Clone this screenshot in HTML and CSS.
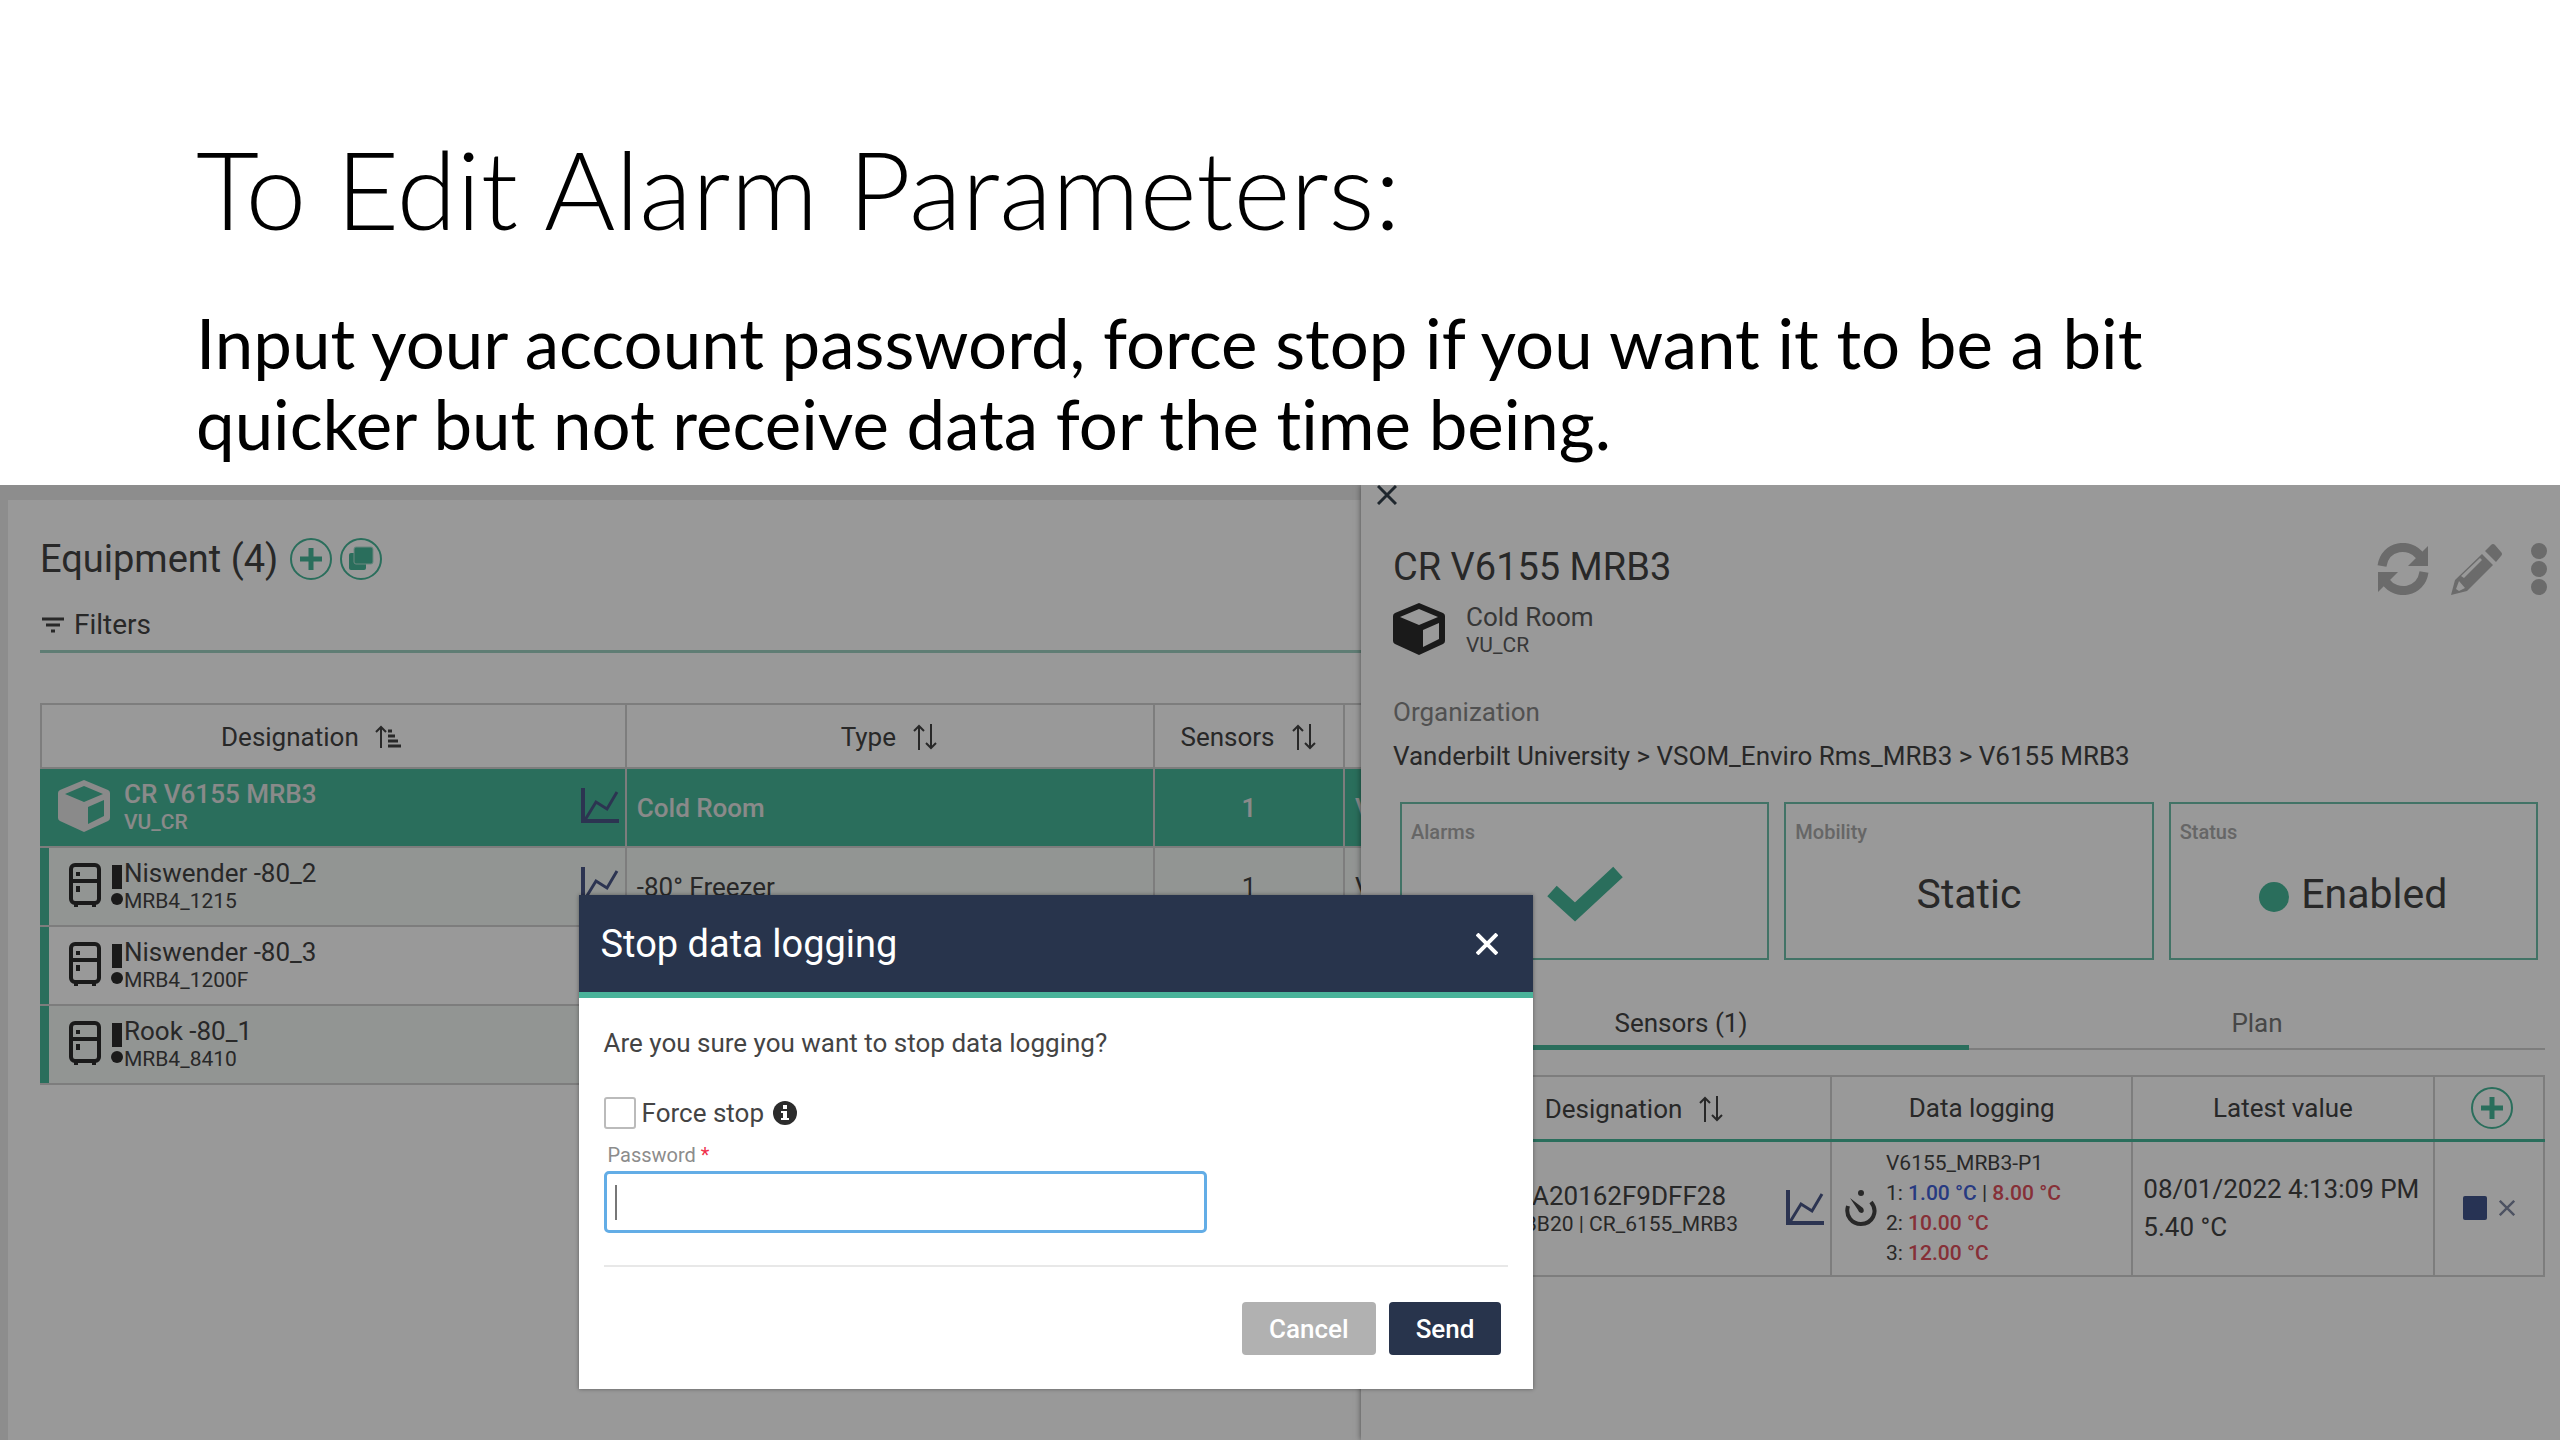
FILE: index.html
```html
<!DOCTYPE html>
<html lang="en">

<head>
    <meta charset="UTF-8">
    <title>To Edit Alarm Parameters</title>
    <link rel="stylesheet" href="styles.css">
</head>

<body>

    <!-- shared icons -->
    <svg class="icon-defs" aria-hidden="true">
        <symbol id="icon-cube" viewBox="0 0 52 52">
            <path fill="currentColor" fill-rule="evenodd" d="M26 0 L50 10 Q52 11 52 13 V38 Q52 40 50 41 L26 52 L2 41 Q0 40 0 38 V13 Q0 11 2 10 Z M26 6 L7 14 L26 22 L45 14 Z M30 27 V44 L46 36 V20 Z" />
        </symbol>
        <symbol id="icon-chart" viewBox="0 0 38 36">
            <path fill="none" stroke="currentColor" stroke-width="4" d="M2 0 V33 H38" />
            <path fill="none" stroke="currentColor" stroke-width="3" d="M4 32 L15 14 L26 21 L36 4" />
        </symbol>
        <symbol id="icon-fridge" viewBox="0 0 32 44">
            <rect x="2" y="2" width="28" height="38" rx="4" fill="none" stroke="currentColor" stroke-width="4" />
            <path fill="none" stroke="currentColor" stroke-width="4" d="M2 18 H30 M7 40 V44 M25 40 V44 M9 9 V13 M9 23 V29" />
        </symbol>
        <symbol id="icon-alert" viewBox="0 0 12 40">
            <path fill="currentColor" d="M1 0 H11 V24 H1 Z" />
            <circle cx="6" cy="34" r="6" fill="currentColor" />
        </symbol>
        <symbol id="icon-sort" viewBox="0 0 28 28">
            <path fill="none" stroke="currentColor" stroke-width="2" d="M8 27 V3 M3 8 L8 3 L13 8 M20 1 V25 M15 20 L20 25 L25 20" />
        </symbol>
        <symbol id="icon-sorted" viewBox="0 0 28 28">
            <path fill="none" stroke="currentColor" stroke-width="2" d="M7 25 V4 M2 9 L7 4 L12 9" />
            <path fill="none" stroke="currentColor" stroke-width="3" d="M14 8 H18 M14 13 H21 M14 18 H24 M14 23 H27" />
        </symbol>
        <symbol id="icon-plus" viewBox="0 0 42 42">
            <circle cx="21" cy="21" r="20" fill="none" stroke="currentColor" stroke-width="2" />
            <path stroke="currentColor" stroke-width="5" d="M21 10 V32 M10 21 H32" />
        </symbol>
        <symbol id="icon-cross" viewBox="0 0 20 20">
            <path stroke="currentColor" stroke-width="3" d="M1 1 L19 19 M19 1 L1 19" />
        </symbol>
    </svg>

    <header class="slide-header">
        <h1>To Edit Alarm Parameters:</h1>
        <p>Input your account password, force stop if you want it to be a bit<br>quicker but not receive data for the time being.</p>
    </header>

    <main class="app">
        <section class="equipment">
            <div class="equipment-title">
                <h2>Equipment (4)</h2>
                <button class="icon-btn" type="button" aria-label="Add"><svg width="42" height="42"><use href="#icon-plus" /></svg></button>
                <button class="icon-btn" type="button" aria-label="Duplicate">
                    <svg width="42" height="42" viewBox="0 0 42 42">
                        <circle cx="21" cy="21" r="20" fill="none" stroke="currentColor" stroke-width="2" />
                        <rect x="9" y="15" width="17" height="17" rx="2" fill="currentColor" />
                        <rect x="14" y="9" width="19" height="17" rx="2" fill="currentColor" stroke="#b5e3d6" stroke-width="1" />
                    </svg>
                </button>
            </div>
            <div class="filters">
                <svg width="22" height="16" viewBox="0 0 22 16"><path stroke="currentColor" stroke-width="3" d="M0 2 H22 M4 8 H18 M9 14 H13" /></svg>
                <span>Filters</span>
            </div>

            <table class="grid equipment-grid">
                <colgroup>
                    <col class="col-name">
                    <col class="col-type">
                    <col class="col-sensors">
                    <col>
                </colgroup>
                <thead>
                    <tr>
                        <th><span class="th">Designation <svg width="28" height="28"><use href="#icon-sorted" /></svg></span></th>
                        <th><span class="th">Type <svg width="28" height="28"><use href="#icon-sort" /></svg></span></th>
                        <th><span class="th">Sensors <svg width="28" height="28"><use href="#icon-sort" /></svg></span></th>
                        <th></th>
                    </tr>
                </thead>
                <tbody>
                    <tr class="selected">
                        <td>
                            <div class="item">
                                <svg class="item-cube" width="54" height="52"><use href="#icon-cube" /></svg>
                                <div class="item-text"><b>CR V6155 MRB3</b><small>VU_CR</small></div>
                                <svg class="chart" width="38" height="36"><use href="#icon-chart" /></svg>
                            </div>
                        </td>
                        <td>Cold Room</td>
                        <td class="num">1</td>
                        <td>V</td>
                    </tr>
                    <tr class="tinted">
                        <td>
                            <div class="item">
                                <svg class="item-fridge" width="32" height="44"><use href="#icon-fridge" /></svg>
                                <svg class="item-alert" width="12" height="40"><use href="#icon-alert" /></svg>
                                <div class="item-text"><span>Niswender -80_2</span><small>MRB4_1215</small></div>
                                <svg class="chart" width="38" height="36"><use href="#icon-chart" /></svg>
                            </div>
                        </td>
                        <td>-80° Freezer</td>
                        <td class="num">1</td>
                        <td>V</td>
                    </tr>
                    <tr>
                        <td>
                            <div class="item">
                                <svg class="item-fridge" width="32" height="44"><use href="#icon-fridge" /></svg>
                                <svg class="item-alert" width="12" height="40"><use href="#icon-alert" /></svg>
                                <div class="item-text"><span>Niswender -80_3</span><small>MRB4_1200F</small></div>
                            </div>
                        </td>
                        <td></td>
                        <td></td>
                        <td></td>
                    </tr>
                    <tr class="tinted">
                        <td>
                            <div class="item">
                                <svg class="item-fridge" width="32" height="44"><use href="#icon-fridge" /></svg>
                                <svg class="item-alert" width="12" height="40"><use href="#icon-alert" /></svg>
                                <div class="item-text"><span>Rook -80_1</span><small>MRB4_8410</small></div>
                            </div>
                        </td>
                        <td></td>
                        <td></td>
                        <td></td>
                    </tr>
                </tbody>
            </table>
        </section>

        <aside class="details">
            <button class="icon-btn details-close" type="button" aria-label="Close panel"><svg width="20" height="20"><use href="#icon-cross" /></svg></button>

            <div class="details-head">
                <h2>CR V6155 MRB3</h2>
                <div class="actions">
                    <button class="icon-btn" type="button" aria-label="Refresh">
                        <svg width="52" height="52" viewBox="0 0 52 52">
                            <path fill="none" stroke="currentColor" stroke-width="9" d="M5 23 C8 2 33 -1 43 13 M47 29 C44 50 19 53 9 39" />
                            <path fill="currentColor" d="M51 3 V23 H31 Z M1 49 V29 H21 Z" />
                        </svg>
                    </button>
                    <button class="icon-btn" type="button" aria-label="Edit">
                        <svg width="52" height="52" viewBox="0 0 52 52">
                            <path fill="currentColor" fill-rule="evenodd" d="M31 11 L42 22 L16 48 L0 52 L4 37 Z M8 38 L5 46 L8 48 L14 45 Z M10 33 L13 35 L31 17 L29 15 Z" />
                            <path fill="currentColor" d="M34 8 L40 2 Q42 0 44 2 L50 9 Q52 11 50 13 L45 19 Z" />
                        </svg>
                    </button>
                    <button class="icon-btn" type="button" aria-label="More">
                        <svg width="16" height="52" viewBox="0 0 16 52"><path fill="currentColor" d="M8 0a8 8 0 1 1 0 16a8 8 0 1 1 0-16 M8 18a8 8 0 1 1 0 16a8 8 0 1 1 0-16 M8 36a8 8 0 1 1 0 16a8 8 0 1 1 0-16" /></svg>
                    </button>
                </div>
            </div>

            <div class="details-type">
                <svg width="52" height="52"><use href="#icon-cube" /></svg>
                <div class="item-text"><span>Cold Room</span><small>VU_CR</small></div>
            </div>

            <p class="org-label">Organization</p>
            <p class="org-path">Vanderbilt University &gt; VSOM_Enviro Rms_MRB3 &gt; V6155 MRB3</p>

            <div class="cards">
                <div class="card">
                    <span class="card-label">Alarms</span>
                    <div class="card-value">
                        <svg class="green" width="76" height="56" viewBox="0 0 76 56"><path fill="none" stroke="currentColor" stroke-width="14" d="M5 25 L28 46 L71 6" /></svg>
                    </div>
                </div>
                <div class="card">
                    <span class="card-label">Mobility</span>
                    <div class="card-value">Static</div>
                </div>
                <div class="card">
                    <span class="card-label">Status</span>
                    <div class="card-value"><i class="dot"></i>Enabled</div>
                </div>
            </div>

            <div class="tabs">
                <button class="tab active" type="button">Sensors (1)</button>
                <button class="tab" type="button">Plan</button>
            </div>

            <table class="grid sensor-grid">
                <colgroup>
                    <col class="col-pin">
                    <col class="col-sensor">
                    <col class="col-logging">
                    <col class="col-latest">
                    <col>
                </colgroup>
                <thead>
                    <tr>
                        <th></th>
                        <th><span class="th">Designation <svg width="28" height="28"><use href="#icon-sort" /></svg></span></th>
                        <th>Data logging</th>
                        <th>Latest value</th>
                        <th><button class="icon-btn green" type="button" aria-label="Add sensor"><svg width="42" height="42"><use href="#icon-plus" /></svg></button></th>
                    </tr>
                </thead>
                <tbody>
                    <tr>
                        <td></td>
                        <td>
                            <div class="sensor">
                                <div class="item-text"><span>A20162F9DFF28</span><small>BB20 | CR_6155_MRB3</small></div>
                                <svg class="chart" width="38" height="36"><use href="#icon-chart" /></svg>
                            </div>
                        </td>
                        <td>
                            <div class="logging">
                                <svg width="32" height="36" viewBox="0 0 32 36">
                                    <path fill="none" stroke="currentColor" stroke-width="4" d="M3 16 C0 26 7 34 16 34 C27 34 34 22 26 12" />
                                    <path fill="currentColor" d="M5 8 L18 18 Q20 22 17 23 Q14 23 13 20 Z" />
                                    <circle cx="16" cy="3" r="3" fill="currentColor" />
                                </svg>
                                <div class="limits">
                                    <div>V6155_MRB3-P1</div>
                                    <div>1: <b class="low">1.00 °C</b> | <b class="high">8.00 °C</b></div>
                                    <div>2: <b class="high">10.00 °C</b></div>
                                    <div>3: <b class="high">12.00 °C</b></div>
                                </div>
                            </div>
                        </td>
                        <td class="latest">08/01/2022 4:13:09 PM<br>5.40 °C</td>
                        <td>
                            <div class="row-actions">
                                <button class="icon-btn stop" type="button" aria-label="Stop"><svg width="24" height="24" viewBox="0 0 24 24"><rect width="24" height="24" rx="2" fill="currentColor" /></svg></button>
                                <button class="icon-btn remove" type="button" aria-label="Remove"><svg width="16" height="16"><use href="#icon-cross" /></svg></button>
                            </div>
                        </td>
                    </tr>
                </tbody>
            </table>
        </aside>

        <div class="backdrop"></div>

        <form class="modal" role="dialog" aria-labelledby="modalTitle">
            <div class="modal-header">
                <h2 id="modalTitle">Stop data logging</h2>
                <button class="icon-btn" type="button" aria-label="Close">
                    <svg width="22" height="22" viewBox="0 0 22 22"><path stroke="currentColor" stroke-width="4" d="M1 1 L21 21 M21 1 L1 21" /></svg>
                </button>
            </div>
            <div class="modal-body">
                <p>Are you sure you want to stop data logging?</p>
                <div class="force">
                    <input type="checkbox" id="forceStop">
                    <label for="forceStop">Force stop</label>
                    <svg width="24" height="24" viewBox="0 0 24 24">
                        <circle cx="12" cy="12" r="12" fill="currentColor" />
                        <path fill="#fff" d="M10 4 H14 V8 H10 Z M8 10 H14 V17 H16 V19 H8 V17 H10 V12 H8 Z" />
                    </svg>
                </div>
                <label class="field-label" for="password">Password <span>*</span></label>
                <div class="field">
                    <input type="password" id="password">
                </div>
                <div class="modal-footer">
                    <button class="btn cancel" type="button">Cancel</button>
                    <button class="btn send" type="submit">Send</button>
                </div>
            </div>
        </form>
    </main>

</body>

</html>
```

FILE: styles.css
```css
* {
    box-sizing: border-box;
}

body {
    display: flex;
    flex-direction: column;
    min-height: 100vh;
    margin: 0;
    background: #fff;
    color: #444;
    font-family: Roboto, "Liberation Sans", sans-serif;
    font-size: 26px;
}

h1,
h2,
p {
    margin: 0;
    font-weight: 400;
}

h2 {
    font-size: 38px;
    line-height: 48px;
}

svg {
    display: block;
    flex: none;
}

button,
input {
    font: inherit;
}

.icon-defs {
    position: absolute;
    width: 0;
    height: 0;
}

.icon-btn {
    padding: 0;
    border: 0;
    background: none;
    color: inherit;
    vertical-align: middle;
    cursor: pointer;
}

.green {
    color: #46b899;
}

/* slide text */
.slide-header {
    padding: 128px 196px 21px;
    color: #000;
    font-family: Lato, sans-serif;
    font-variant-ligatures: none;
}

.slide-header h1 {
    margin-bottom: 54px;
    font-size: 109px;
    font-weight: 300;
    line-height: 120px;
}

.slide-header p {
    font-size: 69px;
    line-height: 81px;
}

/* application */
.app {
    position: relative;
    display: grid;
    grid-template-columns: 1361fr 1199fr;
    flex: 1;
    overflow: hidden;
    background: #ebebeb;
}

.equipment {
    min-width: 0;
    margin: 15px 0 0 8px;
    padding: 35px 0 0 32px;
    overflow: hidden;
    background: #fff;
}

.equipment-title {
    display: flex;
    align-items: center;
    gap: 8px;
    color: #46b899;
}

.equipment-title h2 {
    margin-right: 4px;
    color: #444;
}

.filters {
    display: flex;
    align-items: center;
    gap: 10px;
    margin: 24px 0 50px;
    padding: 0 0 7px 2px;
    border-bottom: 3px solid #9fd0c2;
    font-size: 28px;
    line-height: 36px;
}

/* tables */
.grid {
    width: 100%;
    border-collapse: collapse;
    table-layout: fixed;
}

.grid th,
.grid td {
    padding: 0 10px;
    border: 2px solid #d0d0d0;
    text-align: left;
    white-space: nowrap;
}

.grid th {
    height: 64px;
    font-weight: 400;
    text-align: center;
}

.th {
    display: inline-flex;
    align-items: center;
    gap: 15px;
    vertical-align: middle;
}

.equipment-grid {
    width: 110%;
}

.col-name {
    width: 40.3%;
}

.col-type {
    width: 36.4%;
}

.col-sensors {
    width: 13.1%;
}

.equipment-grid th:first-child {
    padding-right: 54px;
}

.equipment-grid td {
    height: 79px;
}

.equipment-grid td:first-child {
    padding: 0 6px 4px 15px;
    box-shadow: inset 7px 0 #46b899;
}

.equipment-grid tbody td:first-child {
    border-left-color: #46b899;
}

.equipment-grid .selected td {
    background: #46b899;
    color: #e6e6e6;
    font-weight: 500;
}

.equipment-grid .tinted td {
    background: #f4f8f6;
}

.grid .num {
    text-align: center;
}

.item {
    display: flex;
    align-items: center;
}

.item-cube {
    margin-right: 13px;
}

.item-fridge {
    margin: 0 10px 0 12px;
    color: #2c2c2c;
}

.item-alert {
    margin-right: 1px;
    color: #2c2c2c;
}

.item-text {
    line-height: 32px;
}

.item-text > * {
    display: block;
}

.item-text b {
    font-weight: 500;
}

.item-text small {
    font-size: 21px;
    line-height: 24px;
}

.chart {
    margin-left: auto;
    color: #4a5888;
}

/* details panel */
.details {
    min-width: 0;
    padding: 0 15px 40px 32px;
    background: #fff;
    box-shadow: 0 0 6px rgba(0, 0, 0, 0.5);
}

.details-close {
    display: block;
    margin: 0 0 38px -16px;
    color: #35424e;
}

.details-head {
    display: flex;
    justify-content: space-between;
}

.actions {
    display: flex;
    gap: 22px;
    height: 48px;
    margin-right: -2px;
    color: #b2b2b2;
}

.actions .icon-btn:last-child {
    margin-left: 6px;
}

.details-type {
    display: flex;
    align-items: center;
    gap: 21px;
    margin: 10px 0 37px;
    color: #2c2c2c;
}

.details-type .item-text {
    color: #5c5c5c;
}

.org-label {
    margin-bottom: 8px;
    color: #888;
    line-height: 36px;
}

.org-path {
    line-height: 36px;
}

.cards {
    display: grid;
    grid-template-columns: repeat(3, 1fr);
    gap: 15px;
    margin: 28px 7px 44px;
}

.card {
    height: 158px;
    padding: 14px 9px;
    border: 2px solid #6fc0aa;
}

.card-label {
    display: block;
    color: #aaa;
    font-size: 20px;
    font-weight: 500;
    line-height: 28px;
}

.card-value {
    display: flex;
    align-items: center;
    justify-content: center;
    height: 96px;
    font-size: 41px;
}

.dot {
    width: 30px;
    height: 30px;
    margin: 6px 12px 0 0;
    border-radius: 50%;
    background: #46b899;
}

.tabs {
    display: grid;
    grid-template-columns: 1fr 1fr;
    margin-bottom: 25px;
}

.tab {
    padding: 0 0 6px;
    border: 0;
    border-bottom: 2px solid #d0d0d0;
    background: none;
    color: #777;
    line-height: 38px;
}

.tab.active {
    padding-bottom: 3px;
    border-bottom: 5px solid #46b899;
    color: #444;
}

.col-pin {
    width: 4%;
}

.col-sensor {
    width: 34%;
}

.col-logging {
    width: 26.2%;
}

.col-latest {
    width: 26.2%;
}

.sensor-grid thead th {
    border-bottom: 3px solid #46b899;
}

.sensor-grid th:first-child,
.sensor-grid td:first-child {
    border-right: 0;
}

.sensor-grid th:nth-child(2),
.sensor-grid td:nth-child(2) {
    border-left: 0;
}

.sensor-grid th:last-child {
    padding: 0 6px 0 12px;
}

.sensor-grid td {
    height: 136px;
}

.sensor-grid td:nth-child(2) {
    padding-right: 6px;
}

.sensor {
    display: flex;
    align-items: center;
    justify-content: flex-end;
    gap: 48px;
}

.sensor .item-text {
    text-align: right;
}

.sensor .item-text span {
    padding-right: 12px;
}

.sensor .chart {
    margin-left: 0;
}

.logging {
    display: flex;
    align-items: center;
    gap: 9px;
    padding-left: 3px;
}

.limits {
    font-size: 21px;
    line-height: 30px;
}

.limits b {
    font-weight: 500;
}

.low {
    color: #4262d8;
}

.high {
    color: #e0505c;
}

.latest {
    line-height: 38px;
}

.row-actions {
    display: flex;
    align-items: center;
    justify-content: center;
    gap: 12px;
}

.stop {
    color: #42558c;
}

.remove {
    color: #8089a3;
}

/* dialog */
.backdrop {
    position: absolute;
    inset: 0;
    background: rgba(0, 0, 0, 0.4);
}

.modal {
    position: absolute;
    top: 410px;
    left: 22.6%;
    width: 37.3%;
    background: #fff;
    box-shadow: 0 0 4px rgba(0, 0, 0, 0.4);
}

.modal-header {
    display: flex;
    align-items: center;
    justify-content: space-between;
    height: 103px;
    padding: 0 35px 0 22px;
    border-bottom: 6px solid #4ab39a;
    background: #28344c;
    color: #fff;
}

.modal-body {
    padding: 27px 25px 34px;
    line-height: 36px;
}

.force {
    display: flex;
    align-items: center;
    gap: 6px;
    margin: 34px 0 12px;
}

.force input {
    appearance: none;
    width: 32px;
    height: 32px;
    margin: 0;
    border: 2px solid #bbb;
    border-radius: 3px;
    background: #fff;
}

.force svg {
    margin-left: 3px;
    color: #2c2c2c;
}

.field-label {
    display: block;
    padding-left: 4px;
    color: #8c8c8c;
    font-size: 20px;
    line-height: 24px;
}

.field-label span {
    color: #f0304c;
}

.field {
    position: relative;
    width: 66.7%;
    margin: 4px 0 32px;
}

/* text cursor */
.field::after {
    content: "";
    position: absolute;
    top: 14px;
    left: 11px;
    width: 2px;
    height: 35px;
    background: #777;
}

.field input {
    display: block;
    width: 100%;
    height: 62px;
    padding: 0 12px;
    border: 3px solid #63ade6;
    border-radius: 5px;
    outline: 0;
}

.modal-footer {
    display: flex;
    justify-content: flex-end;
    gap: 13px;
    padding: 35px 7px 0 0;
    border-top: 2px solid #e8e8e8;
}

.btn {
    height: 53px;
    padding: 0 27px;
    border: 0;
    border-radius: 4px;
    background: #b1b1b1;
    color: #fff;
    font-weight: 500;
}

.btn.send {
    background: #28344c;
}
```
